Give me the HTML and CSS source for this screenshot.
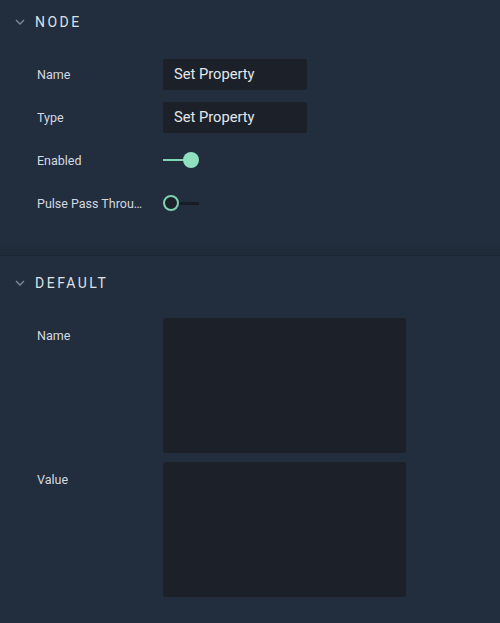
FILE: index.html
```html
<!DOCTYPE html>
<html>
<head>
<meta charset="utf-8">
<link rel="stylesheet" href="styles.css">
</head>
<body>
<div class="panel">
  <section class="section first">
    <div class="header">
      <svg class="chev" width="10" height="6" viewBox="0 0 10 6"><path d="M1 1 L5 5 L9 1" fill="none" stroke="#7f8896" stroke-width="1.4"/></svg>
      <span class="title">NODE</span>
    </div>
    <div class="rows">
      <div class="row">
        <div class="label">Name</div>
        <div class="input">Set Property</div>
      </div>
      <div class="row">
        <div class="label">Type</div>
        <div class="input">Set Property</div>
      </div>
      <div class="row">
        <div class="label">Enabled</div>
        <div class="toggle on"><span class="track"></span><span class="knob"></span></div>
      </div>
      <div class="row">
        <div class="label">Pulse Pass Through</div>
        <div class="toggle off"><span class="knob"></span><span class="track"></span></div>
      </div>
    </div>
  </section>
  <section class="section second">
    <div class="header">
      <svg class="chev" width="10" height="6" viewBox="0 0 10 6"><path d="M1 1 L5 5 L9 1" fill="none" stroke="#7f8896" stroke-width="1.4"/></svg>
      <span class="title">DEFAULT</span>
    </div>
    <div class="rows tall">
      <div class="row top">
        <div class="label">Name</div>
        <div class="area"></div>
      </div>
      <div class="row top">
        <div class="label">Value</div>
        <div class="area"></div>
      </div>
    </div>
  </section>
</div>
</body>
</html>
```
FILE: styles.css
```css
html, body {
  margin: 0;
  padding: 0;
  background: #222d3d;
}
body {
  font-family: Roboto, "Liberation Sans", sans-serif;
  color: #d4d9e0;
  width: 500px;
  height: 623px;
  overflow: hidden;
}
.section.first {
  height: 255px;
  border-bottom: 1px solid #1c2533;
  box-shadow: inset 0 -14px 14px -14px rgba(0,0,0,0.18);
}
.section.second {
  padding-top: 5px;
}
.header {
  height: 44px;
  display: flex;
  align-items: center;
  padding-left: 15px;
}
.chev {
  display: block;
  margin-right: 10px;
}
.title {
  font-size: 14px;
  font-weight: 400;
  letter-spacing: 2.5px;
  color: #dde1e7;
}
.rows {
  padding-top: 14px;
  padding-left: 37px;
  display: flex;
  flex-direction: column;
  gap: 11px;
}
.rows.tall {
  padding-top: 13px;
  gap: 9px;
}
.row {
  display: flex;
  align-items: center;
  height: 32px;
}
.row.top {
  align-items: flex-start;
  height: auto;
}
.label {
  width: 108px;
  margin-right: 18px;
  font-size: 12.5px;
  color: #d4d9e0;
  white-space: nowrap;
  overflow: hidden;
  text-overflow: ellipsis;
}
.row.top .label {
  padding-top: 10px;
}
.input {
  width: 133px;
  height: 31px;
  background: #1b2029;
  border-radius: 2px;
  padding-left: 11px;
  display: flex;
  align-items: center;
  font-size: 14.7px;
  color: #e3e7ec;
}
.area {
  width: 243px;
  height: 135px;
  background: #1b2029;
  border-radius: 3px;
}
.toggle {
  display: flex;
  align-items: center;
  height: 16px;
}
.toggle .track {
  display: block;
  height: 2px;
}
.toggle.on .track {
  width: 22px;
  background: #7fd6b4;
}
.toggle.on .knob {
  display: block;
  width: 16px;
  height: 16px;
  border-radius: 50%;
  background: #8ee0be;
  margin-left: -2px;
}
.toggle.off .knob {
  display: block;
  width: 12px;
  height: 12px;
  border-radius: 50%;
  border: 2px solid #7fd1b0;
  background: #1b2029;
}
.toggle.off .track {
  width: 20px;
  background: #181d25;
  height: 3px;
}
```
